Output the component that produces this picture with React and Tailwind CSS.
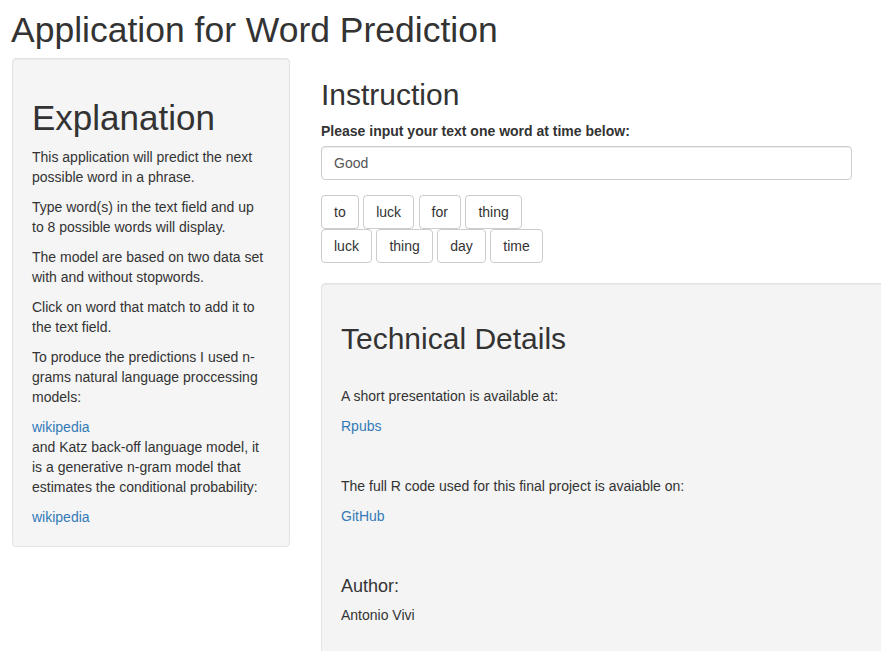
import React from "react";

const words1 = ["to", "luck", "for", "thing"];
const words2 = ["luck", "thing", "day", "time"];

function WordButton({ children }) {
  return (
    <button className="h-[34px] px-[12px] border border-[#ccc] rounded-[4px] bg-white text-[14px] leading-[20px] text-[#333]">
      {children}
    </button>
  );
}

export default function App() {
  return (
    <div
      className="w-[881px] h-[651px] overflow-hidden bg-white text-[#333] text-[14px] leading-[20px]"
      style={{ fontFamily: '"Liberation Sans", Arial, sans-serif' }}
    >
      <h1 className="pl-[11px] mt-[10px] mb-[8px] text-[35.5px] leading-[40px] font-normal">
        Application for Word Prediction
      </h1>
      <div className="flex items-start pl-[12px]">
        <div className="w-[278px] shrink-0 bg-[#f5f5f5] border border-[#e3e3e3] rounded-[4px] pl-[19px] pr-[22px] pt-[19px] pb-[19px] shadow-[inset_0_1px_1px_rgba(0,0,0,0.05)]">
          <h1 className="mt-[20px] mb-[9px] text-[35px] leading-[40px] font-normal">Explanation</h1>
          <p className="mb-[10px]">This application will predict the next possible word in a phrase.</p>
          <p className="mb-[10px]">Type word(s) in the text field and up to 8 possible words will display.</p>
          <p className="mb-[10px]">The model are based on two data set with and without stopwords.</p>
          <p className="mb-[10px]">Click on word that match to add it to the text field.</p>
          <p className="mb-[10px]">To produce the predictions I used n-grams natural language proccessing models:</p>
          <p className="mb-[10px]">
            <a className="text-[#337ab7]">wikipedia</a>
            <br />
            and Katz back-off language model, it is a generative n-gram model that estimates the conditional probability:
          </p>
          <p>
            <a className="text-[#337ab7]">wikipedia</a>
          </p>
        </div>
        <div className="ml-[31px] shrink-0 w-[600px]">
          <h2 className="mt-[20px] mb-[10px] text-[30px] leading-[33px] font-normal">Instruction</h2>
          <label className="block mb-[5px] font-bold">Please input your text one word at time below:</label>
          <div className="w-[531px] h-[34px] border border-[#ccc] rounded-[4px] px-[12px] py-[6px] text-[#555] shadow-[inset_0_1px_1px_rgba(0,0,0,0.075)]">
            Good
          </div>
          <div className="mt-[15px] flex flex-col">
            <div className="flex gap-x-[4.5px]">
              {words1.map((w, i) => (
                <WordButton key={i}>{w}</WordButton>
              ))}
            </div>
            <div className="flex gap-x-[4.5px]">
              {words2.map((w, i) => (
                <WordButton key={i}>{w}</WordButton>
              ))}
            </div>
          </div>
          <div className="mt-[20px] w-[600px] h-[400px] bg-[#f4f4f4] border border-[#e3e3e3] rounded-[4px] px-[19px] pt-[19px] shadow-[inset_0_1px_1px_rgba(0,0,0,0.05)]">
            <h2 className="mt-[19px] mb-[31px] text-[30px] leading-[33px] font-normal">Technical Details</h2>
            <p className="mb-[10px]">A short presentation is available at:</p>
            <p className="mb-[40px]">
              <a className="text-[#337ab7]">Rpubs</a>
            </p>
            <p className="mb-[10px]">The full R code used for this final project is avaiable on:</p>
            <p className="mb-[50px]">
              <a className="text-[#337ab7]">GitHub</a>
            </p>
            <h4 className="mb-[9px] text-[18px] leading-[20px] font-normal">Author:</h4>
            <p>Antonio Vivi</p>
          </div>
        </div>
      </div>
    </div>
  );
}
